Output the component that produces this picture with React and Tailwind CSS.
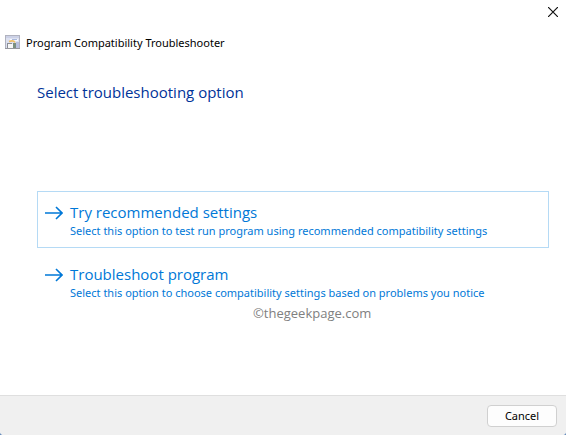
import React from "react";

const options = [
  {
    title: "Try recommended settings",
    description:
      "Select this option to test run program using recommended compatibility settings",
    focused: true,
  },
  {
    title: "Troubleshoot program",
    description:
      "Select this option to choose compatibility settings based on problems you notice",
    focused: false,
  },
];

const ProgramIcon = () => (
  <svg width="16" height="16" viewBox="0 0 16 16" aria-hidden="true">
    <path d="M0 0h15v14H0z" fill="#dde1f0" />
    <path d="M0.5 0v13.5H15M14.5 0v14M0 0.5h15" fill="none" stroke="#b0b2bf" />
    <path d="M1 1h13v2H1z" fill="#ccd1e6" />
    <path d="M5 4h8v2H5z" fill="#f6f8ff" />
    <path d="M7 4.5h5" stroke="#a9b8dc" />
    <path d="M11 7h3v6h-3z" fill="#b9c0de" />
    <path d="M2 9h6v4H2z" fill="#f7f7f7" />
    <path d="M2 8.5h5M2.5 9v4" stroke="#8c8e94" />
    <path d="M4 6.5c3-1 5-1 6 1" fill="none" stroke="#efbd62" strokeWidth="1.6" />
    <path d="M8 8h3v5H8z" fill="#7b8f80" />
    <path d="M0 13.5h15" stroke="#96979e" />
  </svg>
);

const ArrowIcon = () => (
  <svg
    width="18"
    height="14"
    viewBox="0 0 18 14"
    fill="none"
    stroke="#0078d7"
    strokeWidth="1.6"
    aria-hidden="true"
  >
    <path d="M0 7h17M11 1l6 6-6 6" />
  </svg>
);

const OptionButton = ({ title, description, focused }) => (
  <button
    type="button"
    className={`flex w-full items-start gap-[7px] border px-[7px] pt-[9px] pb-2 text-left text-[#0078d7] ${
      focused ? "border-[#b5daf5]" : "border-transparent"
    }`}
  >
    <span className="flex h-6 shrink-0 items-center">
      <ArrowIcon />
    </span>
    <span className="block">
      <span className="block text-[15px] leading-[22px]">{title}</span>
      <span className="block font-['Noto_Sans',sans-serif] text-[11px] leading-4">
        {description}
      </span>
    </span>
  </button>
);

const App = () => {
  return (
    <div className="flex min-h-screen flex-col bg-[#6b8fbd] font-['Open_Sans','Noto_Sans',sans-serif] text-black">
      <div className="flex flex-1 flex-col overflow-hidden rounded-b bg-white">
        <header>
          <div className="flex justify-end px-[7px] pt-1.5">
            <button type="button" aria-label="Close" className="p-px">
              <svg
                width="10"
                height="10"
                viewBox="0 0 10 10"
                stroke="#111"
                strokeWidth="1.2"
                aria-hidden="true"
              >
                <path d="M0 0l10 10M10 0L0 10" />
              </svg>
            </button>
          </div>
          <div className="mt-[17px] flex h-4 items-center gap-[5px] px-[5px]">
            <ProgramIcon />
            <span className="font-['Noto_Sans',sans-serif] text-[11px] leading-4">
              Program Compatibility Troubleshooter
            </span>
          </div>
        </header>

        <main className="flex-1 pt-[30px] pr-[17px] pl-[37px]">
          <h1 className="text-[15px] leading-[22px] text-[#003399]">
            Select troubleshooting option
          </h1>
          <div className="mt-[88px] flex flex-col gap-[5px]">
            {options.map((option) => (
              <OptionButton key={option.title} {...option} />
            ))}
          </div>
          <p className="-mt-[7px] pl-[216px] text-[13px] leading-5 text-[#808080]">
            ©thegeekpage.com
          </p>
        </main>

        <footer className="flex justify-end border-t border-[#dfdfdf] bg-[#f0f0f0] px-[9px] pt-[9px] pb-2">
          <button
            type="button"
            className="h-[22px] w-[70px] rounded border border-[#d0d0d0] bg-[#fdfdfd] font-['Noto_Sans',sans-serif] text-[11px] leading-4"
          >
            Cancel
          </button>
        </footer>
      </div>
    </div>
  );
};

export default App;
